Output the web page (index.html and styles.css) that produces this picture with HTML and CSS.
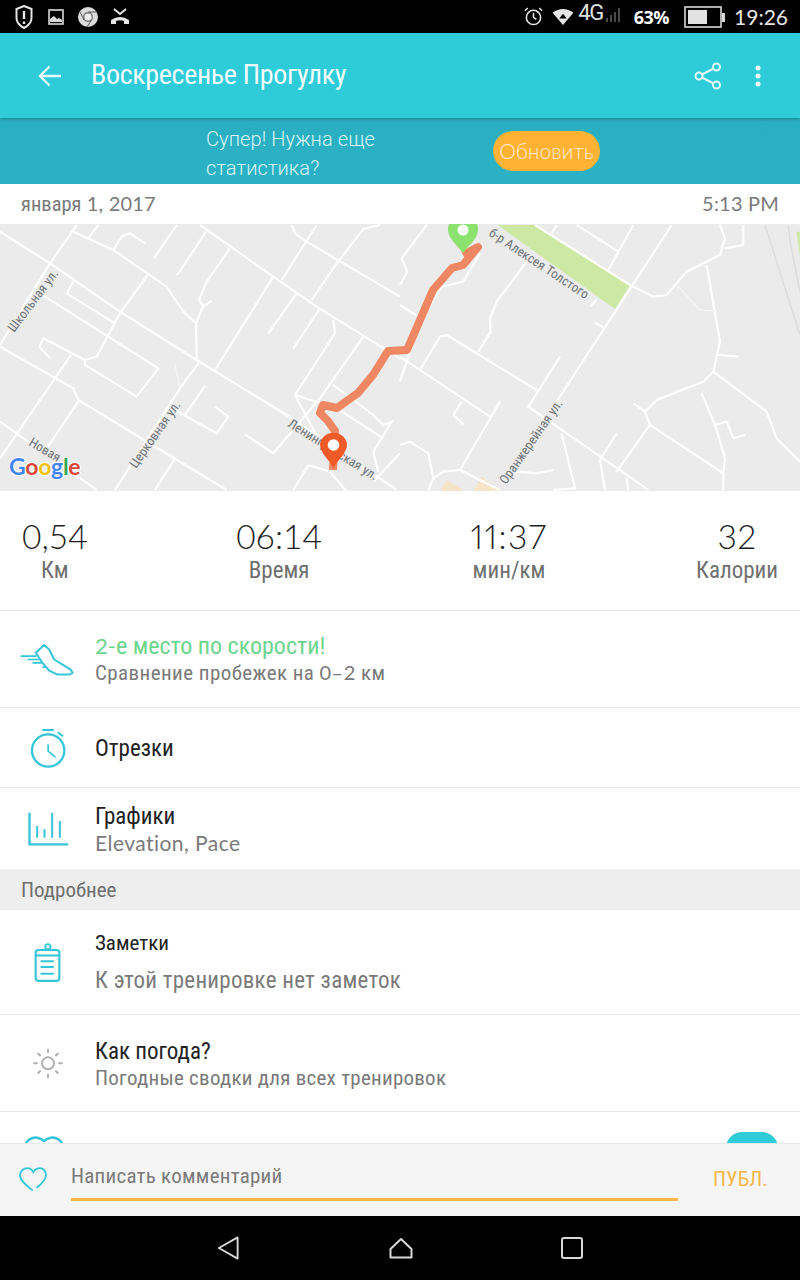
FILE: index.html
```html
<!DOCTYPE html>
<html lang="ru">
<head>
<meta charset="utf-8">
<title>Воскресенье Прогулку</title>
<link rel="stylesheet" href="styles.css">
</head>
<body>
<div class="phone">
  <header class="status">
    <div class="status-left">
      <svg class="ic-shield" viewBox="0 0 18 24"><path d="M9 1 L16.500 4 V13 Q16.500 19 9 23 Q1.500 19 1.500 13 V4 Z" fill="none" stroke="#e6e6e6" stroke-width="2"/><path d="M9 6 V14 M9 16.500 V19" stroke="#e6e6e6" stroke-width="2.400"/></svg>
      <svg class="ic-pic" viewBox="0 0 16 16"><rect x="1" y="1" width="14" height="14" fill="none" stroke="#d8d8d8" stroke-width="1.600"/><path d="M2 13 V10 L6 7 L9 10 L11 9 L14 11 V13 Z" fill="#d8d8d8"/></svg>
      <svg class="ic-chrome" viewBox="0 0 20 20"><circle cx="10" cy="10" r="10" fill="#dcdcdc"/><circle cx="10" cy="10" r="5" fill="#777"/><circle cx="10" cy="10" r="3.600" fill="#eee"/><path d="M10 5 H19 M6 13 L2 5 M13.500 13 L9 20" stroke="#555" stroke-width="1"/></svg>
      <svg class="ic-call" viewBox="0 0 20 18"><path d="M1 16 V12 Q10 6 19 12 V16 H14 V13 Q10 11.500 6 13 V16 Z" fill="#e6e6e6"/><path d="M4 1 L10 6 L16 1" fill="none" stroke="#e6e6e6" stroke-width="2"/></svg>
    </div>
    <div class="status-right">
      <svg class="ic-alarm" viewBox="0 0 20 20"><circle cx="10" cy="11" r="7.500" fill="none" stroke="#e6e6e6" stroke-width="1.600"/><path d="M10 6 V11 L13 13 M1 4 L4 1 M19 4 L16 1" fill="none" stroke="#e6e6e6" stroke-width="1.600"/></svg>
      <svg class="ic-wifi" viewBox="0 0 22 18"><path d="M0 5 Q11 -3 22 5 L11 18 Z" fill="#e6e6e6"/><path d="M11 6 L15 11 H7 Z" fill="#000"/></svg>
      <span class="st-4g">4G</span>
      <svg class="ic-signal" viewBox="0 0 16 16"><path d="M1 16 V12 M5 16 V9 M9 16 V6 M13 16 V2" stroke="#4a4a4a" stroke-width="2"/></svg>
      <span class="st-pct">63%</span>
      <svg class="ic-batt" viewBox="0 0 42 22"><rect x="1" y="1" width="36" height="20" fill="none" stroke="#d8d8d8" stroke-width="1.600"/><rect x="4" y="4" width="19" height="14" fill="#e2e2e2"/><rect x="38" y="7" width="3" height="9" fill="#d8d8d8"/></svg>
      <span class="st-time">19:26</span>
    </div>
  </header>

  <div class="appbar">
    <svg class="ic-back" viewBox="0 0 24 24"><path d="M23 12 H2 M11.500 2.500 L2 12 L11.500 21.500" fill="none" stroke="#eafafb" stroke-width="2.400"/></svg>
    <h1 class="appbar-title">Воскресенье Прогулку</h1>
    <svg class="ic-share" viewBox="0 0 28 28"><path d="M22.500 5 L5 14 L22.500 23" fill="none" stroke="#eafafb" stroke-width="2"/><circle cx="22.500" cy="5" r="3.500" fill="#2ecbd9" stroke="#eafafb" stroke-width="2"/><circle cx="5" cy="14" r="3.500" fill="#2ecbd9" stroke="#eafafb" stroke-width="2"/><circle cx="22.500" cy="23" r="3.500" fill="#2ecbd9" stroke="#eafafb" stroke-width="2"/></svg>
    <svg class="ic-more" viewBox="0 0 6 22"><circle cx="3" cy="3" r="2.500" fill="#fff"/><circle cx="3" cy="11" r="2.500" fill="#fff"/><circle cx="3" cy="19" r="2.500" fill="#fff"/></svg>
  </div>

  <div class="banner">
    <p class="banner-text">Супер! Нужна еще<br>статистика?</p>
    <span class="banner-btn">Обновить</span>
  </div>

  <main class="content">
    <div class="dateline"><span><span class="narrow">января</span> 1, 2017</span><span>5:13 PM</span></div>

    <svg class="map" viewBox="0 0 800 267">
      <rect width="800" height="267" fill="#ebebeb"/>
      <g transform="translate(400,1) scale(.3333)">
        <path d="M293 0 H405 L690 180 L645 252 Z" fill="#cde8a3"/>
        <path d="M1190 20 L1200 20 V95 Z" fill="#cde8a3"/>
        <path d="M120 800 L140 765 L195 800 Z M220 800 L245 755 L305 800 Z" fill="#f5e4c6"/>
      </g>
      <g transform="translate(0,1) scale(.3333)" class="roads">
        <path d="M0 20 L150 115 L360 260 L590 405 L860 570 L1190 795"/>
        <path d="M220 20 L340 75 L500 185 L550 260 L588 295 L590 405"/>
        <path d="M230 0 L150 115 L0 360"/>
        <path d="M295 0 L265 40"/>
        <path d="M435 55 L390 25 L365 35 L340 75"/>
        <path d="M530 0 L462 100"/>
        <path d="M618 20 L532 150"/>
        <path d="M690 70 L620 170 L597 225 L610 243 L635 228 M610 243 L588 295"/>
        <path d="M600 0 L820 155 L950 245 L1200 400"/>
        <path d="M950 0 L845 165"/>
        <path d="M875 0 L885 25 L920 50 L1200 215"/>
        <path d="M1140 0 L1090 12 L1010 115 L935 225"/>
        <path d="M890 205 L805 325"/>
        <path d="M960 250 L880 370"/>
        <path d="M820 155 L645 435"/>
        <path d="M1000 285 L1005 325 L885 510 L960 650"/>
        <path d="M1090 335 L960 520 L820 685 L735 628"/>
        <path d="M443 150 L360 265 L290 395 L255 405 L255 420 L410 515 L475 430 L120 205"/>
        <path d="M220 170 L200 205 L345 295"/>
        <path d="M150 400 L118 365 L130 340 L255 405"/>
        <path d="M0 365 L220 490 L235 525 L680 795"/>
        <path d="M213 390 L0 700"/>
        <path d="M235 530 L140 670"/>
        <path d="M595 415 L540 490 L345 795"/>
        <path d="M615 483 L555 570"/>
        <path d="M525 555 L650 625 L685 575 L645 545"/>
        <path d="M525 700 L465 795"/>
        <path d="M0 590 L290 795"/>
        <path d="M885 510 L1010 550 L1150 640"/>
        <path d="M1000 480 L1120 570 L1150 600 L1175 590 L1120 680 L1135 740"/>
        <path d="M925 720 L990 740 L1040 800 M925 720 L880 795 M1200 685 L1120 770"/>
        <path class="thin" d="M525 420 L540 490"/>
      </g>
      <g transform="translate(400,1) scale(.3333)" class="roads">
        <path d="M530 0 L655 80"/>
        <path d="M700 0 L625 135"/>
        <path d="M405 0 L690 180 L760 215 L800 210 L860 140 L960 90 L975 40 L960 0"/>
        <path d="M815 0 L470 530"/>
        <path d="M1030 0 L1030 60 L975 70"/>
        <path d="M920 120 L960 350 L940 440 L910 470 L770 525 L735 560 L750 600 L970 745 L970 795"/>
        <path d="M940 440 L1100 560 L1130 640 L1200 710"/>
        <path d="M955 390 L1015 395"/>
        <path d="M700 535 L735 560"/>
        <path d="M905 505 L945 600 L975 700 L970 745"/>
        <path d="M945 600 L980 590 L1000 640 L1035 630"/>
        <path d="M750 600 L650 740"/>
        <path d="M650 625 L600 705"/>
        <path d="M480 395 L385 545 L745 795"/>
        <path d="M380 110 L290 230 L270 280 L272 320 L235 380"/>
        <path d="M60 435 L120 335 L140 330 L410 495"/>
        <path d="M0 395 L270 575"/>
        <path d="M300 530 L180 735 L130 740 L100 760 L85 795 M180 735 L300 795"/>
        <path d="M185 530 L160 570 L190 598"/>
        <path d="M0 660 L30 650 L85 685 L100 760"/>
        <path d="M485 625 L525 790 L460 795"/>
        <path d="M350 740 L410 745 L460 735"/>
        <path d="M600 705 L615 795"/>
        <path d="M680 760 L685 795"/>
        <path d="M80 0 L5 100 L22 140 L0 180"/>
        <path d="M0 240 L55 275"/>
        <path d="M240 85 L190 170 L125 185 L60 290 L0 470"/>
        <path d="M570 245 L590 225 M585 292 L610 308 M455 25 L470 0"/>
        <path class="thin" d="M835 185 L900 255 L945 258"/>
        <path class="rail" d="M1095 0 L1200 330 M1165 0 L1172 60 L1200 200"/>
      </g>
      <text class="maplabel" transform="translate(14,109) rotate(-53)">Школьная ул.</text>
      <text class="maplabel" transform="translate(136,245) rotate(-55)">Церковная ул.</text>
      <text class="maplabel" transform="translate(28,221) rotate(30)">Новая</text>
      <text class="maplabel" transform="translate(287,202) rotate(32)">Ленинградская ул.</text>
      <text class="maplabel" transform="translate(488,11) rotate(33.500)">б-р Алексея Толстого</text>
      <text class="maplabel" transform="translate(506,261) rotate(-55)">Оранжерейная ул.</text>
      <path class="route" d="M333 246 L335 207 L328 197 L320 189 L323 181 L337 184 L358 169 L373 151 L388 127 L407 126 L420 96 L433 66 L452 44 L463 41 L478 23 L463 31"/>
      <path d="M463 29 C455 19 448 14 448 5 A15 15 0 0 1 478 5 C478 14 471 19 463 29 Z" fill="#8be26f"/>
      <circle cx="463" cy="6" r="5.500" fill="#fff"/>
      <path d="M333.500 244 C328 234 320 229 320 220 A13.700 13.700 0 0 1 347 220 C347 229 339 234 333.500 244 Z" fill="#f05a28"/>
      <circle cx="333.500" cy="221" r="5.800" fill="#fff"/>
      <text class="google" x="9" y="251"><tspan fill="#4285f4">G</tspan><tspan fill="#d9463a">o</tspan><tspan fill="#f4c20d">o</tspan><tspan fill="#4285f4">g</tspan><tspan fill="#34a853">l</tspan><tspan fill="#d9463a">e</tspan></text>
    </svg>

    <section class="stats">
      <div class="stat"><span class="stat-val">0,54</span><span class="stat-lbl">Км</span></div>
      <div class="stat"><span class="stat-val">06:14</span><span class="stat-lbl">Время</span></div>
      <div class="stat"><span class="stat-val stat-val-ones">11:37</span><span class="stat-lbl">мин/км</span></div>
      <div class="stat"><span class="stat-val">32</span><span class="stat-lbl">Калории</span></div>
    </section>

    <div class="row row-rank">
      <div class="row-icon">
        <svg class="ic-shoe" viewBox="60 60 170 110"><path d="M110 95 L135 72 L150 85 L165 115 L190 130 L215 146 L220 155 L210 160 L175 160 L150 148 L130 125 Z" fill="none" stroke="#34c6d8" stroke-width="6" stroke-linejoin="round"/><path d="M65 105 H112 M85 115 H120 M100 125 H128 M130 138 H138" stroke="#34c6d8" stroke-width="5"/></svg>
      </div>
      <div class="row-text"><div class="t-green"><span class="t-digit">2-</span>е место по скорости!</div><div class="t-sub t-compare">Сравнение пробежек на <span class="t-digit-sm">0–2</span> км</div></div>
    </div>
    <div class="row row-splits">
      <div class="row-icon">
        <svg class="ic-watch" viewBox="85 320 115 125"><circle cx="143" cy="390" r="49" fill="none" stroke="#34c6d8" stroke-width="7"/><path d="M125 328 H160 M172 335 L188 347" stroke="#34c6d8" stroke-width="6"/><path d="M143 372 V392 L165 410" fill="none" stroke="#34c6d8" stroke-width="5"/></svg>
      </div>
      <div class="row-text"><div class="t-main">Отрезки</div></div>
    </div>
    <div class="row row-charts">
      <div class="row-icon">
        <svg class="ic-chart" viewBox="80 575 128 105"><path d="M87 580 V675 H203" fill="none" stroke="#34c6d8" stroke-width="7"/><path d="M110 620 V655 M132 630 V655 M155 580 V655 M178 605 V655" stroke="#34c6d8" stroke-width="6"/></svg>
      </div>
      <div class="row-text"><div class="t-main">Графики</div><div class="t-sub t-latin">Elevation, Pace</div></div>
    </div>

    <div class="section-head">Подробнее</div>

    <div class="row row-notes">
      <div class="row-icon">
        <svg class="ic-clip" viewBox="105 85 82 122"><rect x="110" y="108" width="72" height="94" rx="9" fill="none" stroke="#34c6d8" stroke-width="6.500"/><path d="M110 125 H182 M125 142 H165 M125 160 H165 M125 180 H165" stroke="#34c6d8" stroke-width="6"/><circle cx="147" cy="98" r="8" fill="none" stroke="#34c6d8" stroke-width="5.500"/></svg>
      </div>
      <div class="row-text"><div class="t-small">Заметки</div><div class="t-note">К этой тренировке нет заметок</div></div>
    </div>
    <div class="row row-weather">
      <div class="row-icon">
        <svg class="ic-sun" viewBox="95 410 96 96"><circle cx="143" cy="459" r="18" fill="none" stroke="#b0b0b0" stroke-width="6"/><path d="M143 415 V428 M143 490 V503 M99 459 H112 M174 459 H187 M112 428 L121 437 M165 481 L174 490 M174 428 L165 437 M121 481 L112 490" stroke="#b0b0b0" stroke-width="6"/></svg>
      </div>
      <div class="row-text"><div class="t-main">Как погода?</div><div class="t-sub">Погодные сводки для всех тренировок</div></div>
    </div>
    <div class="row row-hidden">
      <div class="row-icon">
        <svg class="ic-bigheart" viewBox="0 0 46 40"><path d="M23 38 L4 19 A11.500 11.500 0 0 1 23 7 A11.500 11.500 0 0 1 42 19 Z" fill="none" stroke="#34c6d8" stroke-width="2.500"/></svg>
      </div>
      <span class="pill"></span>
    </div>
  </main>

  <div class="commentbar">
    <svg class="ic-heart" viewBox="57 770 84 74"><path d="M98 840 C80 825 60 810 60 795 C60 780 72 773 82 773 C90 773 96 778 100 785 C104 778 112 773 120 773 C130 773 138 782 138 795 C138 805 125 820 110 832" fill="none" stroke="#34c6d8" stroke-width="5.500"/></svg>
    <div class="comment-input">Написать комментарий</div>
    <span class="publish">ПУБЛ.</span>
  </div>

  <nav class="navbar">
    <svg class="ic-navback" viewBox="0 0 24 26"><path d="M21.500 2 V24 L2 13 Z" fill="none" stroke="#d8d8d8" stroke-width="2" stroke-linejoin="round"/></svg>
    <svg class="ic-navhome" viewBox="0 0 24 22"><path d="M12 2 L22.500 12 V20.500 H1.500 V12 Z" fill="none" stroke="#d8d8d8" stroke-width="2" stroke-linejoin="round"/></svg>
    <svg class="ic-navrec" viewBox="0 0 22 22"><rect x="1" y="1" width="20" height="20" rx="2" fill="none" stroke="#d8d8d8" stroke-width="2"/></svg>
  </nav>
</div>
</body>
</html>
```
FILE: styles.css
```css
* { box-sizing: border-box; }
html, body { margin: 0; padding: 0; background: #fff; }
svg { display: block; flex: none; }
h1, p { margin: 0; font-weight: inherit; }

.phone {
  width: 800px;
  height: 1280px;
  display: flex;
  flex-direction: column;
  overflow: hidden;
  font-family: "Liberation Sans Narrow", "Roboto", sans-serif;
  font-stretch: condensed;
}

/* status bar */
.status {
  height: 33px;
  background: #000;
  display: flex;
  justify-content: space-between;
  align-items: center;
  padding: 0 12px 0 15px;
  flex: none;
}
.status-left, .status-right { display: flex; align-items: center; }
.ic-shield { width: 18px; height: 24px; margin-right: 15px; }
.ic-pic { width: 16px; height: 16px; margin-right: 14px; }
.ic-chrome { width: 20px; height: 20px; margin-right: 12px; }
.ic-call { width: 20px; height: 18px; }
.ic-alarm { width: 19px; height: 19px; margin-right: 9px; }
.ic-wifi { width: 22px; height: 17px; margin-right: 4px; }
.st-4g { font: 400 22px "Roboto", sans-serif; color: #e0e0e0; margin: -8px 3px 0 0; letter-spacing: -1.5px; }
.ic-signal { width: 16px; height: 16px; margin: -6px 12px 0 0; }
.st-pct { font: 700 18px "Open Sans", sans-serif; color: #fff; margin-right: 15px; letter-spacing: -.5px; }
.ic-batt { width: 42px; height: 22px; margin-right: 8px; }
.st-time { font: 400 21px "Lato", sans-serif; color: #e6e6e6; }

/* app bar */
.appbar {
  height: 85px;
  flex: none;
  background: #2ecbd9;
  display: flex;
  align-items: center;
  padding: 0 39px 0 38px;
  box-shadow: 0 1px 3px rgba(0,0,0,.25);
  position: relative;
  z-index: 2;
}
.ic-back { width: 24px; height: 24px; margin-right: 30px; }
.appbar-title { font-size: 28px; line-height: 32px; color: #f2fcfd; flex: 1; letter-spacing: -.35px; margin: -2px 0 0 -1px; }
.ic-share { width: 28px; height: 28px; margin-right: 33px; }
.ic-more { width: 6px; height: 22px; }

/* banner */
.banner {
  height: 66px;
  flex: none;
  background: linear-gradient(#2aaec1, #2bb2c6);
  display: flex;
  align-items: center;
  padding-left: 206px;
}
.banner-text {
  font: 300 20px/29px "Roboto", sans-serif;
  color: #d9f4f6;
  width: 287px;
  letter-spacing: .1px;
  padding-top: 6px;
}
.banner-btn {
  width: 107px;
  height: 40px;
  border-radius: 20px;
  background: #ffb233;
  color: #ffeed2;
  font: 300 21px/40px "Lato", "Roboto", sans-serif;
  text-align: center;
}

/* main */
.content { flex: 1; min-height: 0; overflow: hidden; }
.dateline {
  height: 40px;
  display: flex;
  justify-content: space-between;
  align-items: center;
  padding: 0 21px 2px 21px;
  color: #7a7a7a;
  font-size: 20px;
  font-family: "Lato", sans-serif;
  letter-spacing: .2px;
}
.narrow { font-family: "Liberation Sans Narrow", "Roboto", sans-serif; font-size: 20.500px; letter-spacing: 0; }
.map { width: 800px; height: 267px; }
.roads path { fill: none; stroke: #fff; stroke-width: 6.500; }
.roads .thin { stroke: #f6f6f6; stroke-width: 3.500; }
.roads .rail { stroke: #dcdcdc; stroke-width: 4; }
.route { fill: none; stroke: #ef8862; stroke-width: 8; stroke-linejoin: round; }
.maplabel {
  font: 400 13px "Roboto", sans-serif;
  font-stretch: condensed;
  letter-spacing: .1px;
  fill: #6f7478;
  stroke: #ebebeb;
  stroke-width: 2px;
  paint-order: stroke;
}
.google {
  font: 700 23px "Lato", sans-serif;
  stroke: #fff;
  stroke-width: 2px;
  paint-order: stroke;
  letter-spacing: -.3px;
}

.stats {
  height: 120px;
  display: flex;
  justify-content: space-between;
  padding: 24px 22px 0;
  border-bottom: 1px solid #e8e8e8;
}
.stat { display: flex; flex-direction: column; align-items: center; }
.stat-val { font: 300 33.500px/42px "Lato", sans-serif; color: #1f1f1f; }
.stat-val-ones { font-variant-numeric: proportional-nums; letter-spacing: 1.400px; }
.stat-lbl { font-size: 23px; line-height: 26px; color: #6f6f6f; padding-top: 1px; }

.row {
  display: flex;
  align-items: center;
  border-bottom: 1px solid #e8e8e8;
}
.row-icon { width: 95px; flex: none; display: flex; justify-content: center; }
.row-rank { height: 97px; }
.row-splits { height: 80px; }
.row-charts { height: 81px; border-bottom: 0; }
.row-notes { height: 105px; }
.row-weather { height: 97px; }
.row-hidden { height: 100px; align-items: flex-start; position: relative; }

.t-green { font-size: 24px; line-height: 28px; color: #6dd58c; }
.t-digit { font-family: "Lato", sans-serif; font-size: 22px; }
.t-digit-sm { font-family: "Lato", sans-serif; font-size: 20px; }
.t-sub { font-size: 21px; line-height: 26px; color: #7a7a7a; letter-spacing: .25px; margin-top: -1px; }
.t-compare { letter-spacing: .43px; }
.t-latin { font-family: "Lato", sans-serif; letter-spacing: .45px; }
.t-main { font-size: 23px; line-height: 28px; color: #222; padding-top: 2px; }
.t-small { font-size: 21px; line-height: 26px; color: #222; padding-top: 1px; }
.t-note { font-size: 23px; line-height: 30px; color: #7a7a7a; margin-top: 10px; letter-spacing: .25px; }

.section-head {
  height: 41px;
  background: #eeeeee;
  color: #6f6f6f;
  font-size: 21px;
  line-height: 42px;
  padding-left: 21px;
}

.ic-shoe { width: 57px; height: 37px; margin-left: -1px; }
.ic-watch { width: 38px; height: 42px; }
.ic-chart { width: 43px; height: 35px; margin-left: 1px; }
.ic-clip { width: 27px; height: 41px; }
.ic-sun { width: 32px; height: 32px; }
.ic-bigheart { width: 46px; height: 40px; margin: 22px 7px 0 0; }
.pill {
  position: absolute;
  left: 726px;
  top: 20px;
  width: 52px;
  height: 32px;
  border-radius: 16px;
  background: #2ecbd9;
}

/* comment bar */
.commentbar {
  height: 73px;
  flex: none;
  background: #f5f5f5;
  border-top: 1px solid #e8e8e8;
  display: flex;
  align-items: flex-start;
  padding: 0 32px 0 19px;
  position: relative;
}
.ic-heart { width: 28px; height: 25px; margin: 23px 24px 0 0; }
.comment-input {
  width: 607px;
  height: 57px;
  padding-top: 18px;
  font-size: 21px;
  line-height: 28px;
  color: #7a7a7a;
  letter-spacing: .25px;
  border-bottom: 3px solid #fbb848;
}
.publish {
  margin: 22px 0 0 35px;
  font-size: 21px;
  line-height: 26px;
  color: #fbb848;
  letter-spacing: .1px;
}

/* nav */
.navbar {
  height: 64px;
  flex: none;
  background: #000;
  display: flex;
  align-items: center;
  padding: 0 217px;
  justify-content: space-between;
}
.ic-navback { width: 23px; height: 26px; }
.ic-navhome { width: 24px; height: 22px; }
.ic-navrec { width: 22px; height: 22px; }
```
